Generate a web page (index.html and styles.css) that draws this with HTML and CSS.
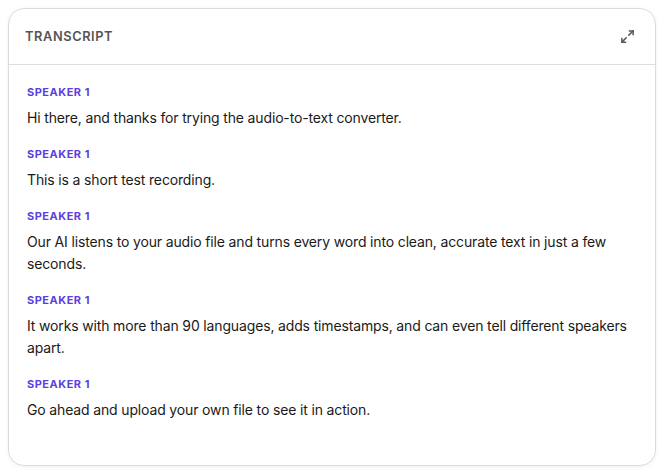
FILE: index.html
```html
<!DOCTYPE html>
<html>
<head>
<meta charset="utf-8">
<link rel="stylesheet" href="styles.css">
</head>
<body>
<div class="card">
  <div class="card-header">
    <span class="title">TRANSCRIPT</span>
    <svg class="expand" width="15" height="15" viewBox="0 0 24 24" fill="none" stroke="currentColor" stroke-width="2.4" stroke-linecap="round" stroke-linejoin="round"><polyline points="15 3 21 3 21 9"/><polyline points="9 21 3 21 3 15"/><line x1="21" y1="3" x2="14" y2="10"/><line x1="3" y1="21" x2="10" y2="14"/></svg>
  </div>
  <div class="card-body">
    <div class="seg"><div class="speaker">SPEAKER 1</div><p class="text">Hi there, and thanks for trying the audio-to-text converter.</p></div>
    <div class="seg"><div class="speaker">SPEAKER 1</div><p class="text">This is a short test recording.</p></div>
    <div class="seg"><div class="speaker">SPEAKER 1</div><p class="text">Our AI listens to your audio file and turns every word into clean, accurate text in just a few seconds.</p></div>
    <div class="seg"><div class="speaker">SPEAKER 1</div><p class="text">It works with more than 90 languages, adds timestamps, and can even tell different speakers apart.</p></div>
    <div class="seg"><div class="speaker">SPEAKER 1</div><p class="text">Go ahead and upload your own file to see it in action.</p></div>
  </div>
</div>
</body>
</html>
```
FILE: styles.css
```css
html, body {
  margin: 0;
  padding: 0;
  background: #ffffff;
}
body {
  padding: 8px 9px 9px 8px;
  font-family: Inter, "Noto Sans", sans-serif;
  color: #1a1a1a;
}
.card {
  width: 648px;
  height: 458px;
  box-sizing: border-box;
  border: 1px solid #dcdcdc;
  border-radius: 16px;
  background: #fff;
  box-shadow: 0 1px 4px rgba(0,0,0,0.06);
  overflow: hidden;
}
.card-header {
  height: 55px;
  border-bottom: 1px solid #dedede;
  display: flex;
  align-items: center;
  justify-content: space-between;
  padding: 0 20px 0 16px;
}
.title {
  font-size: 12.8px;
  font-weight: 600;
  letter-spacing: 0.6px;
  color: #555555;
}
.expand {
  color: #555;
}
.card-body {
  padding: 19px 18px 0 18px;
  display: flex;
  flex-direction: column;
  gap: 17px;
}
.speaker {
  font-size: 11px;
  font-weight: 700;
  letter-spacing: 0.5px;
  color: #5b3fe2;
  line-height: 16px;
}
.text {
  margin: 7px 0 0 0;
  font-size: 14px;
  letter-spacing: -0.15px;
  line-height: 22px;
  color: #1a1a1a;
}
```
